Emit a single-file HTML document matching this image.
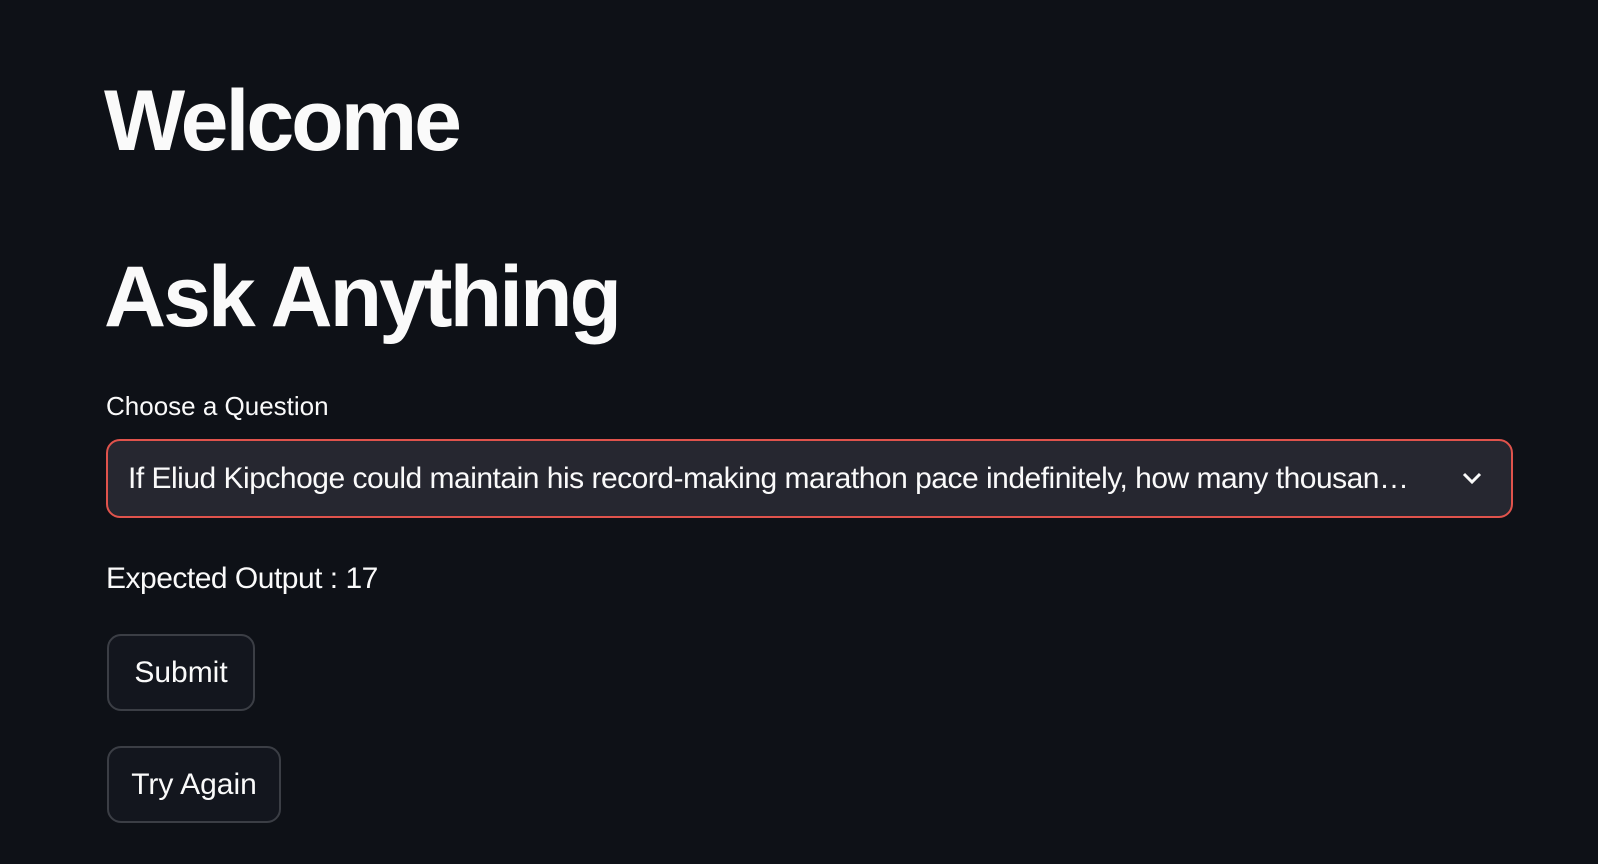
<!DOCTYPE html>
<html><head><style>
body{margin:0;width:1598px;height:864px;background:#0e1117;color:#fafafa;font-family:"Liberation Sans",sans-serif;position:relative;overflow:hidden}
.a{position:absolute;white-space:nowrap}
h1{margin:0;font-size:86px;font-weight:700;letter-spacing:-3px;position:absolute;left:104px;line-height:1}
.sel{position:absolute;left:106px;top:439px;width:1407px;height:79px;border:2px solid #e0534c;border-radius:14px;background:#262730;box-sizing:border-box}
.btn{position:absolute;left:107px;border:2px solid #3b3e45;border-radius:14px;background:#13161e;box-sizing:border-box;font-size:30px;display:flex;align-items:center;justify-content:center}
</style></head><body>
<h1 style="top:78px">Welcome</h1>
<h1 style="top:254px">Ask Anything</h1>
<div class="a" style="left:106px;top:391px;font-size:26px">Choose a Question</div>
<div class="sel">
<div class="a" style="left:20px;top:21px;font-size:30px;width:1290px;overflow:hidden;text-overflow:ellipsis;letter-spacing:-0.5px">If Eliud Kipchoge could maintain his record-making marathon pace indefinitely, how many thousand hours would it take him to run the distance between the Earth and the Moon</div>
<svg class="a" style="left:1352px;top:28px" width="24" height="20" viewBox="0 0 24 20"><path d="M4 5l8 8 8-8" fill="none" stroke="#fafafa" stroke-width="3"/></svg>
</div>
<div class="a" style="left:106px;top:562px;font-size:30px;letter-spacing:-0.5px">Expected Output : 17</div>
<div class="btn" style="top:634px;width:148px;height:77px">Submit</div>
<div class="btn" style="top:746px;width:174px;height:77px">Try Again</div>
</body></html>
